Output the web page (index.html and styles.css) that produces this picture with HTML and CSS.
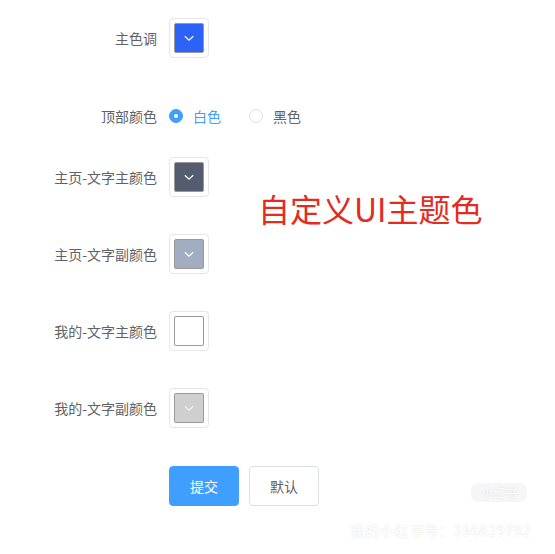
FILE: index.html
```html
<!DOCTYPE html>
<html lang="zh">
<head>
<meta charset="utf-8">
<link rel="stylesheet" href="styles.css">
</head>
<body>
<div class="page">
  <form class="form">
    <div class="item r1">
      <label class="label">主色调</label>
      <div class="picker"><span class="swatch" style="background:#2c63f6"><svg class="chev" viewBox="0 0 12 12"><path d="M1.8 4.2l4.2 4 4.2-4" fill="none" stroke="#fff" stroke-width="1.2"/></svg></span></div>
    </div>
    <div class="item r2">
      <label class="label">顶部颜色</label>
      <div class="radios">
        <span class="radio checked"><span class="dot"></span><span class="rtext">白色</span></span>
        <span class="radio"><span class="dot"></span><span class="rtext">黑色</span></span>
      </div>
    </div>
    <div class="item r3">
      <label class="label">主页-文字主颜色</label>
      <div class="picker"><span class="swatch" style="background:#545c70"><svg class="chev" viewBox="0 0 12 12"><path d="M1.8 4.2l4.2 4 4.2-4" fill="none" stroke="#fff" stroke-width="1.2"/></svg></span></div>
      <div class="title">自定义UI主题色</div>
    </div>
    <div class="item r4">
      <label class="label">主页-文字副颜色</label>
      <div class="picker"><span class="swatch" style="background:#a3adc1"><svg class="chev" viewBox="0 0 12 12"><path d="M1.8 4.2l4.2 4 4.2-4" fill="none" stroke="#fff" stroke-width="1.2"/></svg></span></div>
    </div>
    <div class="item r5">
      <label class="label">我的-文字主颜色</label>
      <div class="picker"><span class="swatch" style="background:#ffffff"></span></div>
    </div>
    <div class="item r6">
      <label class="label">我的-文字副颜色</label>
      <div class="picker"><span class="swatch" style="background:#cfcfcf"><svg class="chev" viewBox="0 0 12 12"><path d="M1.8 4.2l4.2 4 4.2-4" fill="none" stroke="#f2f2f2" stroke-width="1.2"/></svg></span></div>
    </div>
    <div class="item r7">
      <span class="label"></span>
      <div class="buttons">
        <button type="button" class="btn primary">提交</button>
        <button type="button" class="btn">默认</button>
      </div>
    </div>
  </form>
  <div class="wm">
    <span class="wm-logo">小红书</span>
    <span class="wm-text">我的小红书号：356829792</span>
  </div>
</div>
</body>
</html>
```
FILE: styles.css
```css
* { box-sizing: border-box; }
html, body { margin: 0; padding: 0; background: #fff; }
body {
  font-family: "Noto Sans CJK SC", "Liberation Sans", sans-serif;
  width: 555px;
  height: 554px;
  overflow: hidden;
}
.page { position: relative; width: 555px; height: 554px; }
.form { padding-top: 18px; }
.item {
  display: flex;
  align-items: center;
  height: 40px;
  position: relative;
}
.r2 { margin-top: 38px; }
.r3 { margin-top: 21px; }
.r4, .r5, .r6 { margin-top: 37px; }
.r7 { margin-top: 38px; }
.label {
  width: 157px;
  text-align: right;
  font-size: 14px;
  color: #606266;
  flex-shrink: 0;
}
.picker {
  margin-left: 12px;
  width: 40px;
  height: 40px;
  border: 1px solid #e6e6e6;
  border-radius: 4px;
  padding: 4px;
}
.swatch {
  display: flex;
  align-items: center;
  justify-content: center;
  width: 30px;
  height: 30px;
  border: 1px solid #999;
  border-radius: 2px;
}
.chev { width: 12px; height: 12px; }
.radios { margin-left: 12px; display: flex; align-items: center; }
.radio { display: flex; align-items: center; margin-right: 28px; font-size: 14px; color: #606266; }
.dot {
  width: 14px; height: 14px; border-radius: 50%;
  border: 1px solid #dcdfe6; background: #fff;
  margin-right: 10px; position: relative;
}
.radio.checked .dot { border-color: #409eff; background: #409eff; }
.radio.checked .dot::after {
  content: ""; position: absolute; left: 4px; top: 4px;
  width: 4px; height: 4px; border-radius: 50%; background: #fff;
}
.radio.checked .rtext { color: #409eff; }
.title {
  position: absolute;
  left: 258px;
  top: 31px;
  font-size: 32px;
  line-height: 40px;
  color: #e32b1f;
  white-space: nowrap;
}
.buttons { margin-left: 12px; display: flex; gap: 10px; }
.btn {
  width: 70px; height: 40px;
  border: 1px solid #dcdfe6; border-radius: 4px;
  background: #fff; color: #606266;
  font-family: inherit; font-size: 14px;
  padding: 0;
}
.btn.primary { background: #409eff; border-color: #409eff; color: #fff; }
.wm {
  position: absolute; right: 24px; bottom: 14px;
  display: flex; flex-direction: column; align-items: flex-end;
  color: #fff; text-shadow: 0 0 2px rgba(0,0,0,0.15);
}
.wm-logo {
  font-size: 12px; padding: 1px 10px; border-radius: 7px;
  background: rgba(240,240,240,0.6); margin-right: 4px; margin-bottom: 18px;
}
.wm-text { font-size: 14px; letter-spacing: 0.8px; }
```
